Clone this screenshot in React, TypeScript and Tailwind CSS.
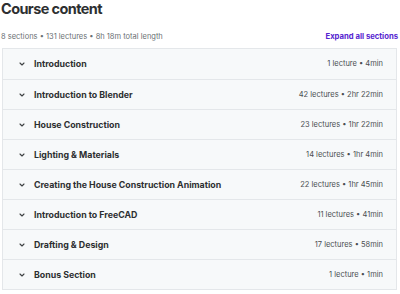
import React from "react";

const sections = [
  ["Introduction", "1 lecture • 4min"],
  ["Introduction to Blender", "42 lectures • 2hr 22min"],
  ["House Construction", "23 lectures • 1hr 22min"],
  ["Lighting & Materials", "14 lectures • 1hr 4min"],
  ["Creating the House Construction Animation", "22 lectures • 1hr 45min"],
  ["Introduction to FreeCAD", "11 lectures • 41min"],
  ["Drafting & Design", "17 lectures • 58min"],
  ["Bonus Section", "1 lecture • 1min"],
];

function Chevron() {
  return (
    <svg width="6" height="4" viewBox="0 0 6 4" fill="none">
      <path d="M1 1 L3 3 L5 1" stroke="#3e4143" strokeWidth="1.1" strokeLinecap="round" strokeLinejoin="round" />
    </svg>
  );
}

export default function App() {
  return (
    <div className="w-[400px] h-[294px] bg-white text-[#2d2f31] overflow-hidden" style={{ fontFamily: "Inter, 'Noto Sans', sans-serif" }}>
      <h2 className="text-[14.5px] font-bold leading-[18px] pl-[1px] tracking-[-0.6px]">Course content</h2>
      <div className="flex items-center justify-between mt-[12px] pl-[1px] pr-[2px] h-[14px]">
        <span className="text-[7.5px] text-[#6a6f73]">8 sections • 131 lectures • 8h 18m total length</span>
        <span className="text-[7.7px] font-bold text-[#5624d0]">Expand all sections</span>
      </div>
      <div className="ml-[2px] mr-[3px] mt-[4px] border border-[#e4e7ea]">
        {sections.map(([t, m], i) => (
          <div key={i} className={`flex items-center justify-between h-[30px] bg-[#f7f9fa] pl-[16px] pr-[13px] ${i > 0 ? "border-t border-[#e4e7ea]" : ""}`}>
            <div className="flex items-center gap-[9px]">
              <Chevron />
              <span className="text-[8.8px] font-bold text-[#2d2f31]">{t}</span>
            </div>
            <span className="text-[7.5px] text-[#4a4e51]">{m}</span>
          </div>
        ))}
      </div>
    </div>
  );
}
